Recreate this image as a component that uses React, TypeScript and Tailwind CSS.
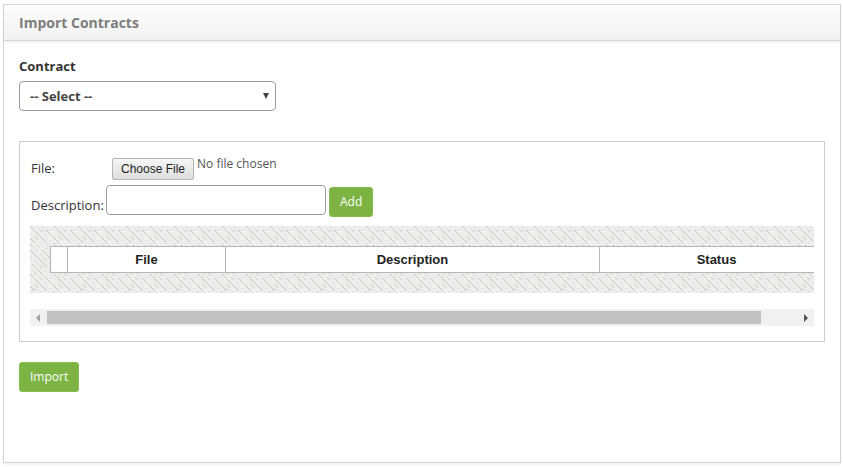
import { useState } from 'react';

const font = "font-['Open_Sans','Noto_Sans',sans-serif]";

function Hatch() {
  return (
    <svg className="absolute inset-0 h-full w-full" aria-hidden="true" shapeRendering="crispEdges">
      <defs>
        <pattern id="hatch" width="48" height="48" patternUnits="userSpaceOnUse">
          <rect width="48" height="48" fill="#ebeeea" />
          <g fill="#f0f2ef">
            <rect x="3" y="2" width="6" height="4" />
            <rect x="19" y="7" width="5" height="6" />
            <rect x="31" y="15" width="6" height="4" />
            <rect x="8" y="22" width="5" height="5" />
            <rect x="24" y="30" width="7" height="4" />
            <rect x="40" y="38" width="6" height="5" />
          </g>
          <g fill="#e6ebe7">
            <rect x="12" y="1" width="4" height="4" />
            <rect x="27" y="5" width="5" height="4" />
            <rect x="2" y="13" width="5" height="4" />
            <rect x="16" y="19" width="5" height="5" />
            <rect x="34" y="27" width="4" height="5" />
            <rect x="12" y="38" width="5" height="4" />
          </g>
          <g stroke="#cbc7ba" strokeWidth="1">
            <path d="M-48 0L0 48M0 0L48 48M-24 0L24 48M24 0L72 48" strokeDasharray="24 3 2 5" />
            <path d="M-36 0L12 48M12 0L60 48M-12 0L36 48M36 0L84 48" strokeDasharray="2 4 18 3" />
          </g>
          <g stroke="#cfccc0" strokeWidth="1" strokeDasharray="1 3 5 4 1 6">
            <path d="M-42 0L6 48M6 0L54 48M-18 0L30 48M30 0L78 48" />
            <path d="M-30 0L18 48M18 0L66 48M-6 0L42 48M42 0L90 48" strokeDashoffset="9" />
          </g>
        </pattern>
      </defs>
      <rect width="100%" height="100%" fill="url(#hatch)" />
    </svg>
  );
}

export default function App() {
  const [fileName, setFileName] = useState('No file chosen');
  return (
    <main className={`bg-white pt-1 pr-0.5 pb-1 pl-[3px] text-[13px] leading-5 text-[#333] ${font}`}>
      <section className="min-h-[459px] border border-[#d5d5d5] bg-white shadow-[0_2px_2px_rgba(0,0,0,0.05)]">
        <header className="border-b border-[#d5d5d5] bg-linear-to-b from-[#fdfdfd] to-[#f1f1f1] px-[15px] pt-2 pb-[7px] shadow-[0_2px_2px_rgba(0,0,0,0.05)]">
          <h1 className="text-sm leading-5 font-bold text-[#7d7d7d]">Import Contracts</h1>
        </header>
        <form className="px-[15px] pt-[15px]" onSubmit={(e) => e.preventDefault()}>
          <label htmlFor="contract" className="block font-bold">Contract</label>
          <div className="relative mt-[5px] w-[257px]">
            <select
              id="contract"
              className="block h-[30px] w-full appearance-none rounded border border-[#95a0a0] bg-white px-2.5 font-bold text-[#444]"
            >
              <option>-- Select --</option>
            </select>
            <svg className="pointer-events-none absolute top-3 right-[7px]" width="6" height="6" viewBox="0 0 6 6" aria-hidden="true">
              <path d="M0 0h6L3 6z" fill="#444" />
            </svg>
          </div>

          <div className="mt-[30px] border border-[#ccc] px-2.5 pt-4 pb-[15px]">
            <div className="flex h-[27px] items-start">
              <span className="w-[82px] shrink-0 pl-px">File:</span>
              <input
                id="file"
                type="file"
                className="peer sr-only"
                onChange={(e) => setFileName(e.target.files?.[0]?.name ?? 'No file chosen')}
              />
              <label
                htmlFor="file"
                className="h-[22px] rounded-xs border border-[#b5b5b5] bg-linear-to-b from-[#f6f6f6] to-[#dedede] px-2 font-['Liberation_Sans',Arial,sans-serif] text-xs leading-5 text-[#222]"
              >
                Choose File
              </label>
              <span className="-mt-1 pl-[3px] text-xs leading-5 text-[#555]">{fileName}</span>
            </div>
            <div className="flex h-8 items-start">
              <label htmlFor="description" className="w-[76px] shrink-0 pt-2.5 pl-px">Description:</label>
              <input
                id="description"
                type="text"
                className="h-[30px] w-[220px] rounded border border-[#95a0a0] bg-white px-2"
              />
              <button type="button" className="mt-0.5 ml-[3px] h-[30px] rounded-[3px] border border-[#84bd50] bg-[#7cb342] px-2.5 text-xs text-white">
                Add
              </button>
            </div>

            <div className="relative mt-[9px] overflow-hidden">
              <Hatch />
              <div className="relative py-5 pl-5">
                <table className="w-[783px] table-fixed border-collapse bg-white font-['Liberation_Sans',Arial,sans-serif] text-[13px] leading-5 text-[#222]">
                  <colgroup>
                    <col className="w-[17px]" />
                    <col className="w-[158px]" />
                    <col className="w-[374px]" />
                    <col className="w-[234px]" />
                  </colgroup>
                  <thead>
                    <tr className="h-[26px]">
                      <th className="border border-[#b5b5b5]" aria-label="Row" />
                      <th className="border border-[#b5b5b5]">File</th>
                      <th className="border border-[#b5b5b5]">Description</th>
                      <th className="border border-[#b5b5b5]">Status</th>
                    </tr>
                  </thead>
                </table>
              </div>
            </div>
            <div className="mt-4 flex h-[17px] items-center bg-[#f1f1f1]">
              <button type="button" aria-label="Scroll left" className="flex w-[17px] justify-center">
                <svg width="5" height="8" viewBox="0 0 5 8" aria-hidden="true"><path d="M4 0v8L0 4z" fill="#a3a3a3" /></svg>
              </button>
              <div className="flex-1">
                <div className="h-[13px] w-[95.2%] bg-[#c1c1c1]" />
              </div>
              <button type="button" aria-label="Scroll right" className="flex w-[17px] justify-center">
                <svg width="4" height="8" viewBox="0 0 4 8" aria-hidden="true"><path d="M0 0v8l4-4z" fill="#505050" /></svg>
              </button>
            </div>
          </div>
          <button type="submit" className="mt-5 h-[30px] rounded-[3px] border border-[#84bd50] bg-[#7cb342] px-2.5 text-xs text-white">
            Import
          </button>
        </form>
      </section>
    </main>
  );
}
